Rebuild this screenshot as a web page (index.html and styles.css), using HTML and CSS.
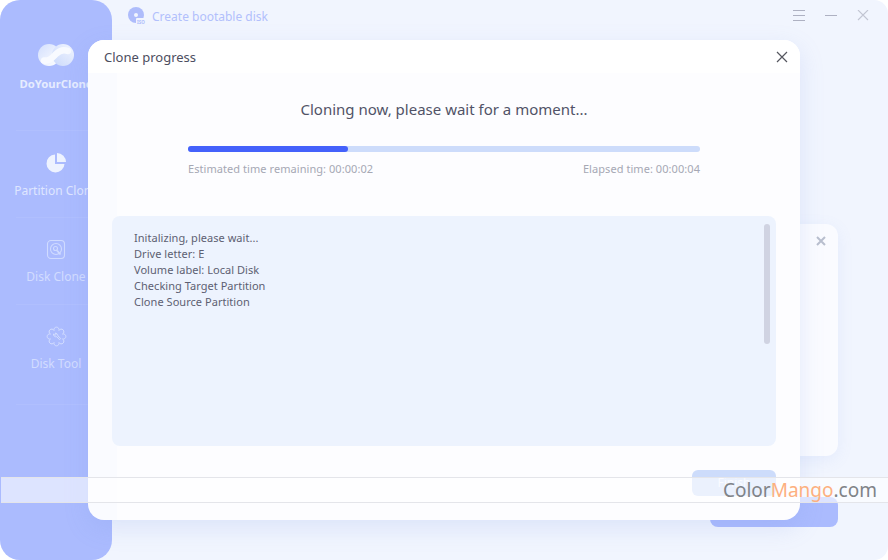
FILE: index.html
```html
<!DOCTYPE html>
<html lang="en">
<head>
    <meta charset="UTF-8"/>
    <title>Clone progress</title>
    <link rel="stylesheet" href="styles.css">
</head>
<body>
    <div class="app">
        <div class="sidebar">
            <div class="brand">
                <svg class="brand-logo" width="36" height="22" viewBox="0 0 36 22">
                    <defs>
                        <linearGradient id="logoLeft" x1="0" y1="0" x2="1" y2="1">
                            <stop offset="0" stop-color="#d3dffd"/>
                            <stop offset="1" stop-color="#ffffff"/>
                        </linearGradient>
                        <linearGradient id="logoRight" x1="0" y1="1" x2="1" y2="0">
                            <stop offset="0" stop-color="#c9d8fb"/>
                            <stop offset="1" stop-color="#f3f6ff"/>
                        </linearGradient>
                    </defs>
                    <circle cx="11" cy="11" r="11" fill="url(#logoLeft)"/>
                    <circle cx="25" cy="11" r="11" fill="url(#logoRight)"/>
                    <path d="M6 16.500C12 17.500 15 13 18 10C21 7 25 5 30 7" fill="none" stroke="#f8faff" stroke-width="6.500" stroke-linecap="round"/>
                </svg>
                <div class="brand-name">DoYourClone</div>
            </div>
            <div class="nav-item nav-bright">
                <svg width="22" height="22" viewBox="0 0 22 22">
                    <path d="M10 2.500a9 9 0 1 0 9.500 9.500H10z" fill="#eef3ff"/>
                    <path d="M12 1a9 9 0 0 1 9 9h-9z" fill="#eef3ff"/>
                </svg>
                <span>Partition Clone</span>
            </div>
            <div class="nav-item">
                <svg width="20" height="21" viewBox="0 0 20 21" fill="none" stroke="#d0dbff" stroke-width="1.100">
                    <rect x="1.500" y="1.500" width="17" height="18" rx="3.500"/>
                    <circle cx="10" cy="10" r="5.500"/>
                    <circle cx="9.500" cy="9.500" r="2"/>
                    <path d="M11 11.500l3.500 4" stroke-width="1.800"/>
                </svg>
                <span>Disk Clone</span>
            </div>
            <div class="nav-item nav-last">
                <svg width="21" height="21" viewBox="0 0 21 21" fill="none" stroke="#d4deff" stroke-width="1" stroke-linejoin="round">
                    <path d="M16.500 12.990A2.600 2.600 0 1 1 12.990 16.500A2.600 2.600 0 1 1 8.010 16.500A2.600 2.600 0 1 1 4.500 12.990A2.600 2.600 0 1 1 4.500 8.010A2.600 2.600 0 1 1 8.010 4.500A2.600 2.600 0 1 1 12.990 4.500A2.600 2.600 0 1 1 16.500 8.010A2.600 2.600 0 1 1 16.500 12.990z"/>
                    <path d="M7.500 8a2.500 2.500 0 0 0 3.300 2.700l2.700 3 1.200-1.200-2.800-2.700A2.500 2.500 0 0 0 9 7.200l1.200 1.300-1.200.8z"/>
                </svg>
                <span>Disk Tool</span>
            </div>
        </div>

        <div class="main">
            <div class="titlebar">
                <div class="title">
                    <svg width="18" height="18" viewBox="0 0 18 18">
                        <circle cx="8" cy="8" r="8" fill="#aebcfb"/>
                        <circle cx="8" cy="8" r="2" fill="#f1f5fe"/>
                        <rect x="8" y="11" width="10" height="6" rx="1" fill="#f1f5fe"/>
                        <text x="9" y="16.500" class="iso">ISO</text>
                    </svg>
                    <span>Create bootable disk</span>
                </div>
                <div class="win-btns">
                    <svg width="12" height="12" viewBox="0 0 12 12" stroke="#aeb1c2" stroke-width="1"><path d="M0 .500h12M0 5.500h12M0 10.500h12"/></svg>
                    <svg width="12" height="12" viewBox="0 0 12 12" stroke="#aeb1c2" stroke-width="1"><path d="M0 5.500h12"/></svg>
                    <svg width="12" height="12" viewBox="0 0 12 12" stroke="#c2c5d3" stroke-width="1.100"><path d="M1 0l10 10M11 0L1 10"/></svg>
                </div>
            </div>
            <div class="content">
                <div class="back-panel">
                    <svg class="back-close" width="10" height="10" viewBox="0 0 10 10" stroke="#b9bfce" stroke-width="2"><path d="M1 1l8 8M9 1L1 9"/></svg>
                </div>
                <div class="back-actions">
                    <div class="back-btn"></div>
                </div>
            </div>
        </div>
    </div>

    <div class="modal">
        <div class="modal-head">
            <span>Clone progress</span>
            <svg width="12" height="12" viewBox="0 0 12 12" stroke="#55565f" stroke-width="1.200"><path d="M1 1l10 10M11 1L1 11"/></svg>
        </div>
        <div class="modal-body">
            <h2>Cloning now, please wait for a moment...</h2>
            <div class="progress"><div class="progress-fill" style="width: 31.250%"></div></div>
            <div class="times">
                <span>Estimated time remaining: 00:00:02</span>
                <span>Elapsed time: 00:00:04</span>
            </div>
            <div class="log">
                <div>Initalizing, please wait...</div>
                <div>Drive letter: E</div>
                <div>Volume label: Local Disk</div>
                <div>Checking Target Partition</div>
                <div>Clone Source Partition</div>
                <div class="log-thumb"></div>
            </div>
            <div class="modal-actions">
                <div class="finish-btn">Finish</div>
            </div>
        </div>
    </div>

    <div class="watermark">
        <span class="wm-text">Color<span class="wm-mango">Mango</span>.com</span>
    </div>
</body>
</html>
```

FILE: styles.css
```css
* {
    margin: 0;
    padding: 0;
    box-sizing: border-box;
}
html, body {
    width: 888px;
    height: 560px;
    overflow: hidden;
    background-color: #ffffff;
    font-family: "Noto Sans", Arial, sans-serif;
}
.app {
    display: flex;
    width: 888px;
    height: 560px;
    background-color: #f1f5fe;
    border-radius: 20px 14px 14px 20px;
}
.sidebar {
    width: 112px;
    flex-shrink: 0;
    background-color: #abbbfe;
    border-radius: 20px;
    display: flex;
    flex-direction: column;
    align-items: center;
    color: #d2dcff;
    font-size: 12px;
}
.brand {
    height: 131px;
    width: 80px;
    padding-top: 44px;
    display: flex;
    flex-direction: column;
    align-items: center;
    border-bottom: 1px solid #b0bffe;
}
.brand-name {
    margin-top: 10px;
    font-size: 11.300px;
    font-weight: 700;
    color: #e6ecff;
    white-space: nowrap;
}
.nav-item {
    width: 80px;
    height: 87px;
    padding-top: 21px;
    display: flex;
    flex-direction: column;
    align-items: center;
    gap: 8px;
    border-bottom: 1px solid #b0bffe;
    white-space: nowrap;
}
.nav-last {
    height: 100px;
}
.nav-bright {
    color: #dfe6ff;
}
.main {
    flex: 1;
    display: flex;
    flex-direction: column;
}
.titlebar {
    height: 32px;
    padding: 0 19px 0 16px;
    display: flex;
    align-items: center;
    justify-content: space-between;
}
.title {
    display: flex;
    align-items: center;
    gap: 6px;
    font-size: 12px;
    color: #b2c0fc;
}
.iso {
    font-size: 4.500px;
    font-weight: 700;
    fill: #aebcfb;
}
.win-btns {
    display: flex;
    gap: 20px;
}
.content {
    flex: 1;
    display: flex;
    flex-direction: column;
    align-items: flex-end;
    padding: 192px 50px 33px 30px;
}
.back-panel {
    width: 100%;
    height: 232px;
    background-color: #fafbff;
    border-radius: 12px;
    box-shadow: 0 4px 16px rgba(120, 150, 240, 0.1);
    display: flex;
    justify-content: flex-end;
    padding: 12px 12px 0 0;
}
.back-actions {
    margin-top: 41px;
}
.back-btn {
    width: 128px;
    height: 30px;
    background-color: #abbbfe;
    border-radius: 8px;
}
.modal {
    position: absolute;
    left: 88px;
    top: 40px;
    width: 712px;
    height: 480px;
    background: linear-gradient(to right, #fafbff 29px, #fdfdff 29px);
    border-radius: 16px;
    box-shadow: 0 8px 24px rgba(120, 150, 230, 0.18);
    display: flex;
    flex-direction: column;
}
.modal-head {
    height: 33px;
    padding: 0 12px 0 16px;
    display: flex;
    align-items: center;
    justify-content: space-between;
    background-color: #ffffff;
    border-radius: 16px 16px 0 0;
    font-size: 13px;
    color: #4c4e60;
}
.modal-body {
    flex: 1;
    padding: 0 24px;
    display: flex;
    flex-direction: column;
}
h2 {
    margin-top: 25px;
    font-size: 15px;
    font-weight: 400;
    line-height: 22px;
    text-align: center;
    color: #515367;
}
.progress {
    margin: 26px 76px 0;
    height: 6px;
    border-radius: 3px;
    background-color: #cddcfb;
}
.progress-fill {
    height: 100%;
    border-radius: 3px;
    background-color: #4461fb;
}
.times {
    margin: 9px 76px 0;
    display: flex;
    justify-content: space-between;
    font-size: 11px;
    letter-spacing: 0.060px;
    line-height: 16px;
    color: #a6a8b4;
}
.log {
    position: relative;
    margin-top: 39px;
    height: 230px;
    padding: 14px 22px;
    background-color: #edf3fe;
    border-radius: 8px;
    font-size: 11px;
    letter-spacing: 0.040px;
    line-height: 16px;
    color: #5d5f72;
}
.log-thumb {
    position: absolute;
    top: 8px;
    right: 6px;
    width: 6px;
    height: 120px;
    border-radius: 3px;
    background-color: #d0d3e2;
}
.modal-actions {
    margin-top: 24px;
    display: flex;
    justify-content: flex-end;
}
.finish-btn {
    width: 84px;
    height: 26px;
    border-radius: 6px;
    background-color: #cddcfb;
    color: #f2f6ff;
    font-size: 12px;
    line-height: 26px;
    text-align: center;
}
.watermark {
    position: absolute;
    left: 1px;
    top: 477px;
    width: 887px;
    height: 26px;
    background-color: rgba(255, 255, 255, 0.6);
    border-top: 1px solid #e4e5ea;
    border-bottom: 1px solid #e4e5ea;
    display: flex;
    align-items: center;
    justify-content: flex-end;
    padding-right: 11px;
}
.wm-text {
    font-size: 19px;
    color: #808388;
}
.wm-mango {
    color: #fdb07f;
}
```
